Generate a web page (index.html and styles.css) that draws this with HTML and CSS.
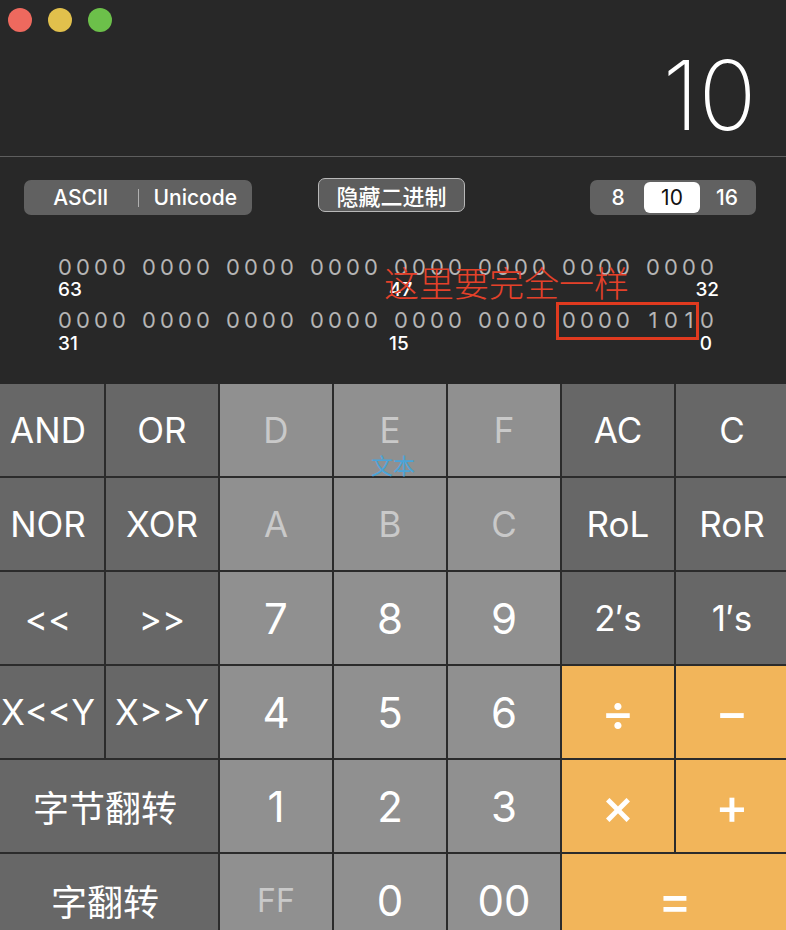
FILE: index.html
```html
<!DOCTYPE html>
<html lang="zh">
<head>
<meta charset="utf-8">
<title>计算器 - 程序员</title>
<link rel="stylesheet" href="styles.css">
</head>
<body>
<div class="app">
  <div class="top">
    <div class="titlebar">
      <span class="light red"></span>
      <span class="light yellow"></span>
      <span class="light green"></span>
    </div>
    <div class="display"><span class="value">10</span></div>
    <div class="controls">
      <div class="seg enc">
        <span class="seg-item">ASCII</span>
        <span class="divider"></span>
        <span class="seg-item">Unicode</span>
      </div>
      <div class="toggle">隐藏二进制</div>
      <div class="seg base">
        <span class="b b8">8</span>
        <span class="b b10 active">10</span>
        <span class="b b16">16</span>
      </div>
    </div>
    <div class="bits">
      <div class="bit-row">
        <span class="g"><i>0</i><i>0</i><i>0</i><i>0</i></span>
        <span class="g"><i>0</i><i>0</i><i>0</i><i>0</i></span>
        <span class="g"><i>0</i><i>0</i><i>0</i><i>0</i></span>
        <span class="g"><i>0</i><i>0</i><i>0</i><i>0</i></span>
        <span class="g"><i>0</i><i>0</i><i>0</i><i>0</i></span>
        <span class="g"><i>0</i><i>0</i><i>0</i><i>0</i></span>
        <span class="g"><i>0</i><i>0</i><i>0</i><i>0</i></span>
        <span class="g"><i>0</i><i>0</i><i>0</i><i>0</i></span>
      </div>
      <div class="labels hi"><span>63</span><span>47</span><span class="r">32</span></div>
      <div class="bit-row low">
        <span class="g"><i>0</i><i>0</i><i>0</i><i>0</i></span>
        <span class="g"><i>0</i><i>0</i><i>0</i><i>0</i></span>
        <span class="g"><i>0</i><i>0</i><i>0</i><i>0</i></span>
        <span class="g"><i>0</i><i>0</i><i>0</i><i>0</i></span>
        <span class="g"><i>0</i><i>0</i><i>0</i><i>0</i></span>
        <span class="g"><i>0</i><i>0</i><i>0</i><i>0</i></span>
        <span class="g"><i>0</i><i>0</i><i>0</i><i>0</i></span>
        <span class="g"><i>1</i><i>0</i><i>1</i><i>0</i></span>
      </div>
      <div class="labels lo"><span>31</span><span>15</span><span class="r">0</span></div>
    </div>
  </div>
  <div class="keys">
    <div class="k op">AND</div>
    <div class="k op">OR</div>
    <div class="k num off">D</div>
    <div class="k num off">E</div>
    <div class="k num off">F</div>
    <div class="k op">AC</div>
    <div class="k op">C</div>

    <div class="k op">NOR</div>
    <div class="k op">XOR</div>
    <div class="k num off">A</div>
    <div class="k num off">B</div>
    <div class="k num off">C</div>
    <div class="k op">RoL</div>
    <div class="k op">RoR</div>

    <div class="k op">&lt;&lt;</div>
    <div class="k op">&gt;&gt;</div>
    <div class="k num digit">7</div>
    <div class="k num digit">8</div>
    <div class="k num digit">9</div>
    <div class="k op">2′s</div>
    <div class="k op">1′s</div>

    <div class="k op">X&lt;&lt;Y</div>
    <div class="k op">X&gt;&gt;Y</div>
    <div class="k num digit">4</div>
    <div class="k num digit">5</div>
    <div class="k num digit">6</div>
    <div class="k orange sym">÷</div>
    <div class="k orange sym">−</div>

    <div class="k op cjk wide">字节翻转</div>
    <div class="k num digit">1</div>
    <div class="k num digit">2</div>
    <div class="k num digit">3</div>
    <div class="k orange sym">×</div>
    <div class="k orange sym">+</div>

    <div class="k op cjk wide">字翻转</div>
    <div class="k num off ff">FF</div>
    <div class="k num digit">0</div>
    <div class="k num digit">00</div>
    <div class="k orange sym eq">=</div>
  </div>

  <div class="note">这里要完全一样</div>
  <div class="note-box"></div>
  <div class="hint">文本</div>
</div>
</body>
</html>
```

FILE: styles.css
```css
html, body {
  margin: 0;
  padding: 0;
}
body {
  background: #282828;
  width: 786px;
  height: 930px;
  overflow: hidden;
  font-family: "Inter", "Noto Sans CJK SC", sans-serif;
  color: #ffffff;
}
.app {
  position: relative;
  width: 786px;
  height: 930px;
  overflow: hidden;
}
.top {
  height: 384px;
  display: flex;
  flex-direction: column;
  overflow: hidden;
}
.titlebar {
  height: 40px;
  display: flex;
  align-items: center;
  gap: 16px;
  padding-left: 8px;
}
.light {
  width: 24px;
  height: 24px;
  border-radius: 50%;
  display: block;
}
.red { background: #ee695e; }
.yellow { background: #e1c04c; }
.green { background: #6cc04a; }

.display {
  height: 108px;
  padding-top: 8px;
  border-bottom: 1px solid #5e5e5e;
  display: flex;
  justify-content: flex-end;
  padding-right: 30px;
}
.value {
  font-family: "Inter", sans-serif;
  font-weight: 200;
  font-size: 96px;
  line-height: 95px;
  letter-spacing: -0.5px;
}

.controls {
  margin-top: 21px;
  display: flex;
  align-items: flex-start;
  padding-left: 24px;
  padding-right: 30px;
  height: 37px;
}
.seg {
  background: #616161;
  border-radius: 7px;
  height: 35px;
  display: flex;
  align-items: center;
  margin-top: 2px;
  font-size: 21px;
  font-weight: 500;
}
.enc {
  width: 228px;
}
.seg-item {
  flex: 1;
  text-align: center;
}
.divider {
  width: 1px;
  height: 18px;
  background: #b0b0b0;
}
.toggle {
  margin-left: 66px;
  width: 145px;
  height: 32px;
  border: 1.5px solid #b8b8b8;
  border-radius: 7px;
  background: #5d5d5d;
  display: flex;
  align-items: center;
  justify-content: center;
  font-family: "Noto Sans CJK SC", sans-serif;
  font-size: 22px;
  font-weight: 500;
}
.base {
  margin-left: auto;
  width: 166px;
  padding: 0 2px;
  box-sizing: border-box;
}
.b {
  height: 31px;
  display: flex;
  align-items: center;
  justify-content: center;
  border-radius: 6px;
}
.b8 { width: 52px; }
.b10 { width: 56px; }
.b16 { width: 54px; }
.active {
  background: #ffffff;
  color: #111111;
  font-weight: 400;
}

.bits {
  margin-top: 41px;
}
.bit-row {
  display: flex;
  gap: 12px;
  padding-left: 56px;
  font-size: 22px;
  line-height: 22px;
  color: #b5b5b5;
}
.bit-row.low {
  margin-top: 10px;
}
.g {
  display: flex;
}
.g i {
  font-style: normal;
  width: 18px;
  text-align: center;
}
.labels {
  display: grid;
  grid-template-columns: 331px 1fr auto;
  margin-left: 58px;
  font-size: 19px;
  line-height: 19px;
  font-weight: 500;
}
.labels.hi {
  width: 661px;
  margin-top: 2px;
}
.labels.lo {
  width: 654px;
  margin-top: 3px;
}
.labels .r {
  text-align: right;
}

.keys {
  display: grid;
  grid-template-columns: repeat(7, 112px);
  grid-template-rows: repeat(6, 92px);
  gap: 2px;
  margin-left: -8px;
  width: 796px;
  background: #2b2b2b;
}
.k {
  display: flex;
  align-items: center;
  justify-content: center;
  font-size: 35px;
  color: #ffffff;
}
.op { background: #676767; }
.num { background: #909090; }
.orange { background: #f2b55a; }
.off { color: #c9c9c9; }
.digit { font-size: 42px; }
.ff { font-size: 32px; }
.sym { font-size: 50px; font-weight: 500; }
.cjk {
  font-family: "Noto Sans CJK SC", sans-serif;
  font-size: 36px;
}
.wide { grid-column: span 2; }
.eq { grid-column: span 2; }

.note {
  position: absolute;
  left: 384px;
  top: 260px;
  font-family: "Noto Sans CJK SC", sans-serif;
  font-weight: 300;
  font-size: 35px;
  line-height: 44px;
  color: #e4412a;
  white-space: nowrap;
}
.note-box {
  position: absolute;
  left: 556px;
  top: 302px;
  width: 137px;
  height: 32px;
  border: 3px solid #e03a1f;
}
.hint {
  position: absolute;
  left: 371px;
  top: 449px;
  font-family: "Noto Sans CJK SC", sans-serif;
  font-size: 22px;
  line-height: 30px;
  color: #4ba4d8;
}
```
